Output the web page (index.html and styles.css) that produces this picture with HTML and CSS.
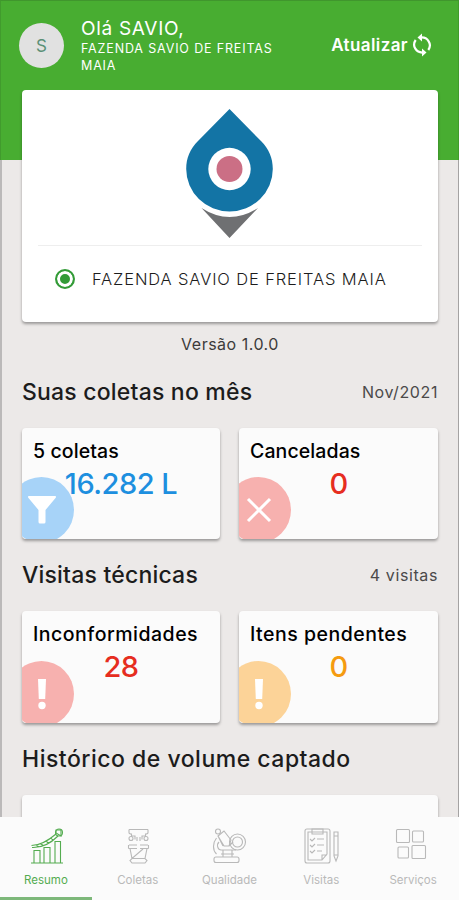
FILE: index.html
```html
<!DOCTYPE html>
<html lang="pt-BR">

<head>
    <meta charset="UTF-8">
    <meta name="viewport" content="width=device-width, initial-scale=1.0">
    <title>Resumo</title>
    <link rel="stylesheet" href="styles.css">
</head>

<body>
    <div class="app">
        <header class="header">
            <div class="avatar">S</div>
            <div class="user">
                <div class="hello">Olá SAVIO,</div>
                <div class="farm">FAZENDA SAVIO DE FREITAS<br>MAIA</div>
            </div>
            <div class="refresh">
                <span>Atualizar</span>
                <svg width="20" height="24" viewBox="0 0 20 24" fill="none" stroke="#fff" stroke-width="2.2">
                    <path d="M9 4.500C15.500 4 20.500 11 16.300 17M11 19.500C4.500 20 -.5 13 3.700 7"/>
                    <path d="M10 .5v8L5.500 4.500zM10 15.500v8l4.500-4z" fill="#fff" stroke="none"/>
                </svg>
            </div>
        </header>

        <main class="content">
            <section class="card farm-card">
                <svg class="logo" width="88" height="130" viewBox="0 0 88 130">
                    <path d="M43.500 0L75 32C83 40 86.800 49 86.800 60A43.300 42.500 0 0 1 .2 60C.2 49 4 40 12 32Z" fill="#1374a5"/>
                    <circle cx="43.500" cy="60" r="21.200" fill="#fff"/>
                    <circle cx="43.500" cy="60" r="13" fill="#cb6f85"/>
                    <path d="M15.500 99Q43.500 117 72 99L43.500 129Z" fill="#6f7072"/>
                </svg>
                <div class="farm-option">
                    <span class="radio"></span>
                    <span class="farm-name">FAZENDA SAVIO DE FREITAS MAIA</span>
                </div>
            </section>
            <p class="version">Versão 1.0.0</p>

            <div class="section-title">
                <h2>Suas coletas no mês</h2>
                <span>Nov/2021</span>
            </div>
            <div class="cards">
                <div class="card stat">
                    <h3>5 coletas</h3>
                    <div class="badge blue">
                        <svg width="28" height="28" viewBox="0 0 28 28" fill="#fff"><path d="M.5 0h27q1 1 0 2L17.500 14v12q0 1.500-1.500 1.500h-4q-1.500 0-1.500-1.500V14L.5 2q-1-1 0-2z"/></svg>
                    </div>
                    <strong class="value v-blue">16.282 L</strong>
                </div>
                <div class="card stat">
                    <h3>Canceladas</h3>
                    <div class="badge red">
                        <svg width="28" height="28" viewBox="0 0 28 28" stroke="#fff" stroke-width="3"><path d="M3 3l22 22M25 3L3 25"/></svg>
                    </div>
                    <strong class="value v-red">0</strong>
                </div>
            </div>

            <div class="section-title second">
                <h2>Visitas técnicas</h2>
                <span>4 visitas</span>
            </div>
            <div class="cards second">
                <div class="card stat">
                    <h3 class="wide">Inconformidades</h3>
                    <div class="badge red">
                        <svg width="10" height="32" viewBox="0 0 10 32" fill="#fff"><path d="M1 1h8l-.8 20H1.800z"/><circle cx="5" cy="27.500" r="3.700"/></svg>
                    </div>
                    <strong class="value v-red">28</strong>
                </div>
                <div class="card stat">
                    <h3 class="wide">Itens pendentes</h3>
                    <div class="badge orange">
                        <svg width="10" height="32" viewBox="0 0 10 32" fill="#fff"><path d="M1 1h8l-.8 20H1.800z"/><circle cx="5" cy="27.500" r="3.700"/></svg>
                    </div>
                    <strong class="value v-orange">0</strong>
                </div>
            </div>

            <div class="section-title second">
                <h2 class="wide">Histórico de volume captado</h2>
            </div>
            <div class="card chart"></div>
        </main>

        <nav class="tabs">
            <a class="tab active">
                <svg width="36" height="38" viewBox="0 0 36 38">
                    <path d="M3 36h32M6 36V23.500h6V36M16 36V20.500h6V36M27 36V14.500h5.500V36"/>
                    <path d="M3.500 18.500C12 18.500 21 13 28 7M4 20.500C14 21 23 16 30 9M8 18l3 2M13 17l3 2M18 14l3 2.500M23 11l2 2.500M28 3h5v6l-5-3z"/>
                    <circle cx="31" cy="5.500" r="3.500"/>
                </svg>
                <span>Resumo</span>
            </a>
            <a class="tab">
                <svg width="36" height="38" viewBox="0 0 36 38">
                    <path d="M9 2.500h19M9 2.500v3q0 1.500 2.500 1.500v3M28 2.500v3q0 1.500-2.500 1.500v3M12 9h3v3.500M25 9h-3v3.500M17 10v4M20 10v4"/>
                    <circle cx="11" cy="11.500" r="2"/><circle cx="26" cy="11.500" r="2"/>
                    <path d="M9 18h8M20 18h8M8.500 21.500h8.500M20 21.500h8.500M8.500 18v3.500M28.500 18v3.500M10 21.500l2 10L23 22M27 21.500l-2 10M12 31.500h13l2 2-2 2.500H12l-2-2.500z"/>
                </svg>
                <span>Coletas</span>
            </a>
            <a class="tab">
                <svg width="36" height="38" viewBox="0 0 36 38">
                    <circle cx="7" cy="4.500" r="2.500"/>
                    <path d="M7 9l6-5 7 9-2 6h-5zM18 19l4-4M7 9l5 10M5.500 11C1.500 16 1.500 23 5.500 27M8 15c-3 3-1 8 2 8h15M10 27h13M12 23v7M21 23v7"/>
                    <circle cx="26.500" cy="15" r="8"/><circle cx="26.500" cy="15" r="5"/>
                    <rect x="3" y="30" width="25" height="5.500" rx="2"/>
                </svg>
                <span>Qualidade</span>
            </a>
            <a class="tab">
                <svg width="36" height="38" viewBox="0 0 36 38">
                    <rect x="2" y="2" width="25" height="34" rx="2"/>
                    <path d="M5 5h19v22l-5 6H5zM19 33v-5h5M9 5V2h11v5H9zM7 12l2 2 3-3M14 12h7M7 18l2 2 3-3M14 18h7M7 24l2 2 3-3M14 24h5M31 5h4v24l-2 5-2-5zM31 9h4M31 28h4"/>
                </svg>
                <span>Visitas</span>
            </a>
            <a class="tab">
                <svg width="36" height="38" viewBox="0 0 36 38">
                    <rect x="1.500" y="2.500" width="13" height="13" rx="1"/>
                    <rect x="17.500" y="4" width="11" height="11" rx="1"/>
                    <rect x="3" y="20" width="10.500" height="11" rx="1"/>
                    <rect x="17" y="18.500" width="13.500" height="13" rx="1"/>
                </svg>
                <span>Serviços</span>
            </a>
        </nav>
    </div>
</body>

</html>
```
FILE: styles.css
```css
* {
    box-sizing: border-box;
}

body {
    margin: 0;
    font-family: Inter, "Open Sans", sans-serif;
    color: #1c1c1c;
}

.app {
    display: flex;
    flex-direction: column;
    width: 459px;
    height: 900px;
    overflow: hidden;
    background: #ece9e8;
    box-shadow: inset 2px 0 0 #bbb9b9, inset -1px 0 0 #a5a3a3;
}

.header {
    display: flex;
    align-items: flex-start;
    flex: none;
    height: 160px;
    padding: 18px 26px 0 19px;
    background: #48ad31;
    border-left: 1px solid #419b2d;
    border-top: 1px solid #40962d;
    border-right: 1px solid #419b2d;
    color: #fff;
}

.avatar {
    display: flex;
    align-items: center;
    justify-content: center;
    width: 45px;
    height: 45px;
    margin: 4px 17px 0 -1px;
    border-radius: 50%;
    background: #e1e1e1;
    color: #5b9076;
    font-size: 17px;
}

.user {
    flex: 1;
    white-space: nowrap;
}

.hello {
    height: 20px;
    font-size: 19px;
    line-height: 20px;
    letter-spacing: 0.7px;
}

.farm {
    margin-top: 1px;
    font-size: 12.5px;
    line-height: 17px;
    letter-spacing: 0.85px;
}

.refresh {
    display: flex;
    align-items: center;
    gap: 4px;
    margin-top: 14px;
    font-size: 17px;
    font-weight: 600;
    letter-spacing: 0.4px;
}

.content {
    flex: 1;
    min-height: 0;
    margin-top: -70px;
    padding: 0 21px 0 22px;
    overflow: hidden;
}

.card {
    border-radius: 4px;
    background: #fbfbfb;
    box-shadow: 0 2px 3px rgba(0, 0, 0, 0.35);
}

.farm-card {
    height: 232px;
    padding: 19px 16px 0;
    background: #fff;
}

.logo {
    display: block;
    margin: 0 auto;
}

.farm-option {
    display: flex;
    align-items: center;
    height: 67px;
    margin-top: 6px;
    padding-left: 17px;
    border-top: 1px solid #eee;
}

.radio {
    width: 20px;
    height: 20px;
    margin-right: 17px;
    border: 2px solid #339b37;
    border-radius: 50%;
    background: #339b37;
    box-shadow: inset 0 0 0 3px #fff;
}

.farm-name {
    font-size: 16.5px;
    font-weight: 300;
    letter-spacing: 0.87px;
    white-space: nowrap;
}

.version {
    margin: 11px 0 0;
    font-size: 16px;
    line-height: 22px;
    letter-spacing: 0.5px;
    text-align: center;
    color: #3c3b3b;
}

.section-title {
    display: flex;
    align-items: center;
    justify-content: space-between;
    height: 73px;
    white-space: nowrap;
}

.section-title.second {
    height: 72px;
}

h2 {
    margin: 0;
    font-size: 23px;
    font-weight: 450;
    letter-spacing: 0.2px;
}

h2.wide {
    letter-spacing: 0.5px;
}

.section-title span {
    font-size: 16px;
    letter-spacing: 0.6px;
    color: #4b4a4a;
}

.cards {
    display: grid;
    grid-template-columns: 198px 199px;
    gap: 19px;
}

.stat {
    position: relative;
    height: 111px;
    padding: 11px 12px;
    overflow: hidden;
    white-space: nowrap;
}

.second .stat {
    height: 112px;
}

h3 {
    margin: 0 0 0 -1px;
    font-size: 19.5px;
    font-weight: 450;
    line-height: 24px;
    letter-spacing: 0.1px;
    color: #000;
}

h3.wide {
    letter-spacing: 0.5px;
}

.value {
    position: relative;
    display: block;
    margin-top: 3px;
    font-size: 29px;
    font-weight: 500;
    line-height: 36px;
    letter-spacing: -0.5px;
    text-align: center;
}

.v-blue {
    color: #1d8fdf;
}

.v-red {
    color: #e62d20;
}

.v-orange {
    color: #f59b10;
}

/* circle cut off by the corner of the card */
.badge {
    position: absolute;
    left: -13px;
    bottom: -4px;
    display: flex;
    align-items: center;
    justify-content: center;
    width: 65px;
    height: 66px;
    border-radius: 50%;
}

.blue {
    background: #a7d3f8;
}

.red {
    background: #f7b1af;
}

.orange {
    background: #fcd398;
}

.chart {
    height: 120px;
}

.tabs {
    display: grid;
    grid-template-columns: repeat(5, 1fr);
    flex: none;
    height: 83px;
    background: #fbfbfb;
}

.tab {
    display: flex;
    flex-direction: column;
    align-items: center;
    padding-top: 10px;
    border-bottom: 3px solid transparent;
    color: #b9b9b9;
    font-size: 11.5px;
}

.tab svg {
    fill: none;
    stroke: currentColor;
    stroke-width: 1.1;
}

.tab span {
    margin-top: 8px;
    line-height: 14px;
}

.tab.active {
    border-bottom-color: #7db87a;
    color: #54ac50;
}
```
